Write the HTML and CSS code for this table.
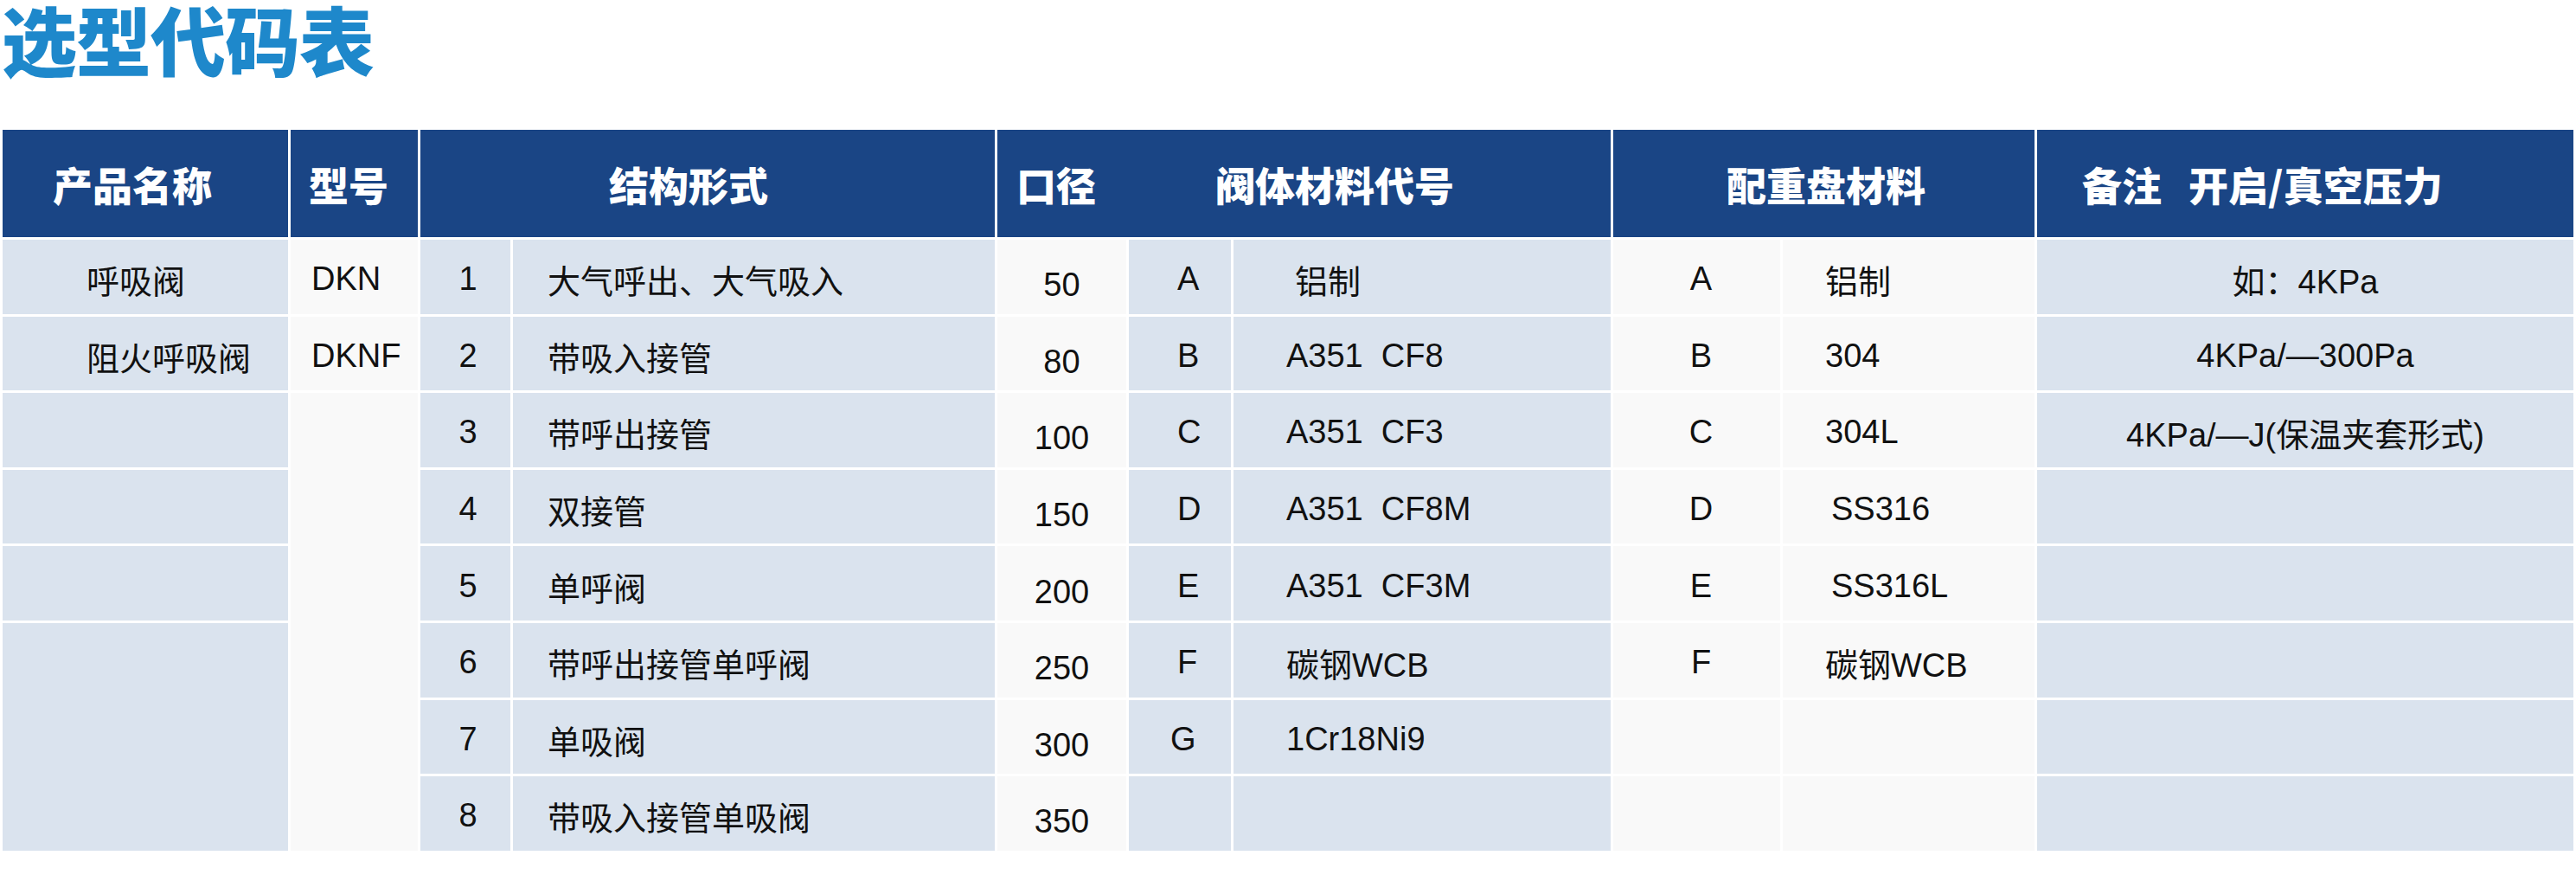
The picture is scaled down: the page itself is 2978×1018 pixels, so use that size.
FILE: index.html
```html
<!DOCTYPE html>
<html lang="zh-CN">
<head>
<meta charset="utf-8">
<title>选型代码表</title>
<link rel="stylesheet" href="styles.css">
</head>
<body>
<h1 class="title">选型代码表</h1>
<div class="table">
  <div class="th th-name">产品名称</div>
  <div class="th th-model">型号</div>
  <div class="th th-struct">结构形式</div>
  <div class="th th-size"><span>口径</span><span class="th-mat">阀体材料代号</span></div>
  <div class="th th-disc">配重盘材料</div>
  <div class="th th-note">备注<span class="gap"></span>开启/真空压力</div>

  <div class="td c1">呼吸阀</div>
  <div class="td c2">DKN</div>
  <div class="td c3">1</div>
  <div class="td c4">大气呼出、大气吸入</div>
  <div class="td c5">50</div>
  <div class="td c6">A</div>
  <div class="td c7 c7-al">铝制</div>
  <div class="td c8">A</div>
  <div class="td c9">铝制</div>
  <div class="td c10">如：4KPa</div>

  <div class="td c1">阻火呼吸阀</div>
  <div class="td c2">DKNF</div>
  <div class="td c3">2</div>
  <div class="td c4">带吸入接管</div>
  <div class="td c5">80</div>
  <div class="td c6">B</div>
  <div class="td c7">A351  CF8</div>
  <div class="td c8">B</div>
  <div class="td c9">304</div>
  <div class="td c10">4KPa/—300Pa</div>

  <div class="td c1"></div>
  <div class="td c2 span6"></div>
  <div class="td c3">3</div>
  <div class="td c4">带呼出接管</div>
  <div class="td c5">100</div>
  <div class="td c6">C</div>
  <div class="td c7">A351  CF3</div>
  <div class="td c8">C</div>
  <div class="td c9">304L</div>
  <div class="td c10">4KPa/—J(保温夹套形式)</div>

  <div class="td c1"></div>
  <div class="td c3">4</div>
  <div class="td c4">双接管</div>
  <div class="td c5">150</div>
  <div class="td c6">D</div>
  <div class="td c7">A351  CF8M</div>
  <div class="td c8">D</div>
  <div class="td c9 c9-ss">SS316</div>
  <div class="td c10"></div>

  <div class="td c1"></div>
  <div class="td c3">5</div>
  <div class="td c4">单呼阀</div>
  <div class="td c5">200</div>
  <div class="td c6">E</div>
  <div class="td c7">A351  CF3M</div>
  <div class="td c8">E</div>
  <div class="td c9 c9-ss">SS316L</div>
  <div class="td c10"></div>

  <div class="td c1 span3"></div>
  <div class="td c3">6</div>
  <div class="td c4">带呼出接管单呼阀</div>
  <div class="td c5">250</div>
  <div class="td c6">F</div>
  <div class="td c7">碳钢WCB</div>
  <div class="td c8">F</div>
  <div class="td c9">碳钢WCB</div>
  <div class="td c10"></div>

  <div class="td c3">7</div>
  <div class="td c4">单吸阀</div>
  <div class="td c5">300</div>
  <div class="td c6 c6-g">G</div>
  <div class="td c7">1Cr18Ni9</div>
  <div class="td c8"></div>
  <div class="td c9"></div>
  <div class="td c10"></div>

  <div class="td c3">8</div>
  <div class="td c4">带吸入接管单吸阀</div>
  <div class="td c5">350</div>
  <div class="td c6"></div>
  <div class="td c7"></div>
  <div class="td c8"></div>
  <div class="td c9"></div>
  <div class="td c10"></div>
</div>
</body>
</html>
```

FILE: styles.css
```css
html, body {
  margin: 0;
  padding: 0;
  background: #ffffff;
}

body {
  width: 2978px;
  font-family: "Liberation Sans", "Noto Sans CJK SC", sans-serif;
}

.title {
  margin: 0;
  height: 150px;
  padding-left: 2px;
  font-family: "Noto Sans CJK SC", sans-serif;
  font-weight: 900;
  font-size: 87px;
  line-height: 88px;
  color: #1e88cb;
  letter-spacing: -1px;
}

.table {
  display: grid;
  margin-left: 3px;
  width: 2975px;
  grid-template-columns: 330px 147px 104px 557px 149px 118px 436px 193px 291px 620px;
  grid-template-rows: 124px repeat(8, 85.6px);
  gap: 3px;
  background: #ffffff;
}

.th {
  background: #1a4585;
  color: #ffffff;
  font-family: "Noto Sans CJK SC", sans-serif;
  font-weight: 900;
  font-size: 46px;
  display: flex;
  align-items: center;
  white-space: pre;
}

.th-name { padding-left: 58px; }
.th-model { padding-left: 21px; }
.th-struct { grid-column: span 2; padding-left: 218px; }
.th-size { grid-column: span 3; padding-left: 22px; }
.th-mat { margin-left: 138px; }
.th-disc { grid-column: span 2; padding-left: 131px; }
.th-note { padding-left: 52px; }
.gap { display: inline-block; width: 31px; }

.td {
  display: flex;
  align-items: center;
  font-size: 38px;
  color: #111111;
  white-space: pre;
  padding-top: 6px;
  box-sizing: border-box;
}

.c1, .c3, .c4, .c6, .c7, .c10 { background: #dae3ee; }
.c2, .c5, .c8, .c9 { background: #f9f9f9; }

.c1 { padding-left: 97px; }
.c2 { padding-left: 24px; }
.c3 { justify-content: center; padding-left: 6px; }
.c4 { padding-left: 40px; }
.c5 { justify-content: center; padding-top: 20px; }
.c6 { padding-left: 56px; }
.c6-g { padding-left: 48px; }
.c7 { padding-left: 61px; }
.c7-al { padding-left: 71px; }
.c8 { justify-content: center; padding-left: 10px; }
.c9 { padding-left: 49px; }
.c9-ss { padding-left: 56px; }
.c10 { justify-content: center; }

.span6 { grid-row: span 6; }
.span3 { grid-row: span 3; }
```
